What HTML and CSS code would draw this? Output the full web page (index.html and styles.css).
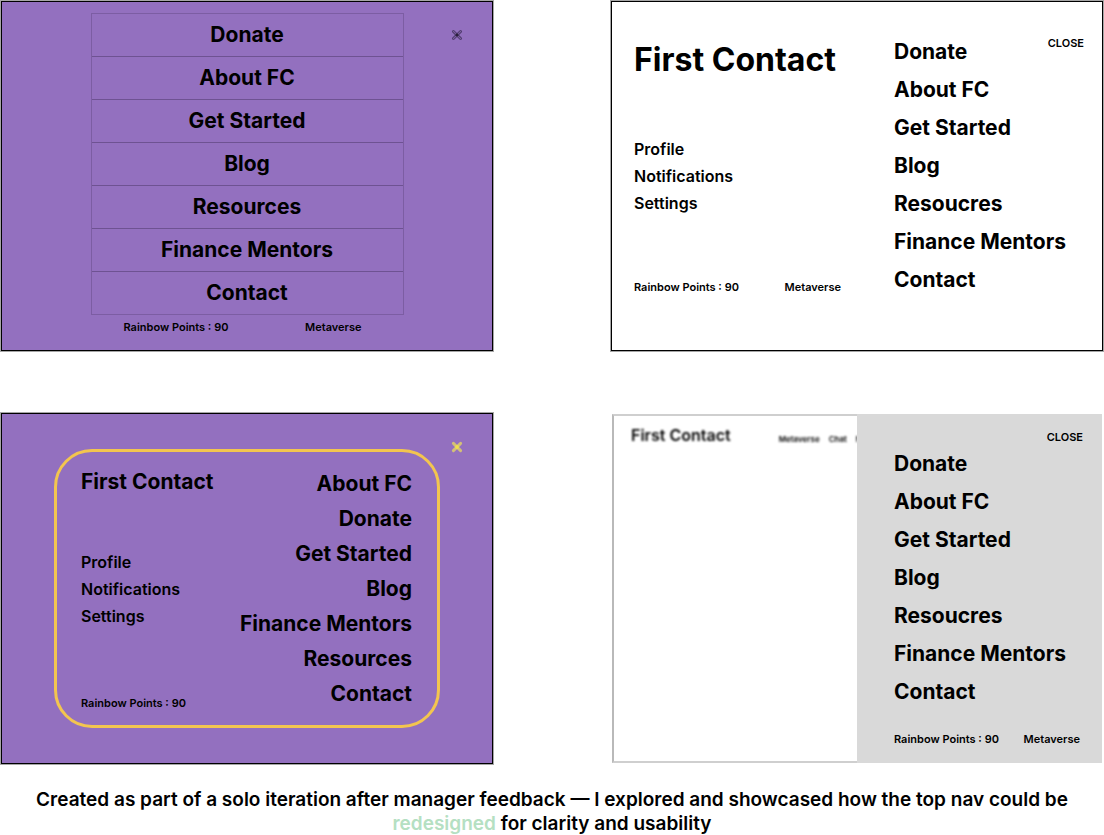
FILE: index.html
```
<!DOCTYPE html>
<html lang="en">
<head>
<meta charset="utf-8">
<meta name="viewport" content="width=device-width, initial-scale=1">
<title>Top nav iterations</title>
<link rel="stylesheet" href="styles.css">
</head>
<body>
<main class="page">
  <div class="boards">
    <section class="board board-purple stacked">
      <div class="stacked-main">
        <nav class="menu menu-boxed">
          <a href="#">Donate</a><a href="#">About FC</a><a href="#">Get Started</a><a href="#">Blog</a><a href="#">Resources</a><a href="#">Finance Mentors</a><a href="#">Contact</a>
        </nav>
        <div class="meta"><span>Rainbow Points : 90</span><a href="#">Metaverse</a></div>
      </div>
      <button class="close-icon" aria-label="Close">
        <svg width="12" height="12" viewBox="0 0 12 12" fill="none" stroke-linecap="round"><path d="M2.4 2.4 9.6 9.6M9.6 2.4 2.4 9.6" stroke="#4a3768" stroke-width="2.8"/><path d="M2.4 2.4 9.6 9.6M9.6 2.4 2.4 9.6" stroke="#7d60a2" stroke-width="1.2"/><circle cx="6" cy="6" r="1.4" fill="#2b203c"/></svg>
      </button>
    </section>

    <section class="board board-white split">
      <div class="split-side">
        <h1 class="title title-large">First Contact</h1>
        <nav class="submenu">
          <a href="#">Profile</a><a href="#">Notifications</a><a href="#">Settings</a>
        </nav>
        <div class="meta"><span>Rainbow Points : 90</span><a href="#">Metaverse</a></div>
      </div>
      <nav class="menu menu-loose">
        <a href="#">Donate</a><a href="#">About FC</a><a href="#">Get Started</a><a href="#">Blog</a><a href="#">Resoucres</a><a href="#">Finance Mentors</a><a href="#">Contact</a>
      </nav>
      <button class="close-text">CLOSE</button>
    </section>

    <section class="board board-purple framed">
      <div class="frame">
        <div class="frame-side">
          <h2 class="title">First Contact</h2>
          <nav class="submenu">
            <a href="#">Profile</a><a href="#">Notifications</a><a href="#">Settings</a>
          </nav>
          <div class="meta"><span>Rainbow Points : 90</span></div>
        </div>
        <nav class="menu menu-right">
          <a href="#">About FC</a><a href="#">Donate</a><a href="#">Get Started</a><a href="#">Blog</a><a href="#">Finance Mentors</a><a href="#">Resources</a><a href="#">Contact</a>
        </nav>
      </div>
      <button class="close-icon" aria-label="Close">
        <svg width="12" height="12" viewBox="0 0 12 12" fill="none" stroke-linecap="round"><path d="M2.4 2.4 9.6 9.6M9.6 2.4 2.4 9.6" stroke="#d3c077" stroke-width="3"/><circle cx="6" cy="6" r="1.9" fill="#f0e04c"/></svg>
      </button>
    </section>

    <section class="board-drawer">
      <div class="backdrop">
        <div class="backdrop-bar">
          <span class="backdrop-logo">First Contact</span>
          <span class="backdrop-links"><span>Metaverse</span><span>Chat</span><span>N</span></span>
        </div>
      </div>
      <div class="drawer">
        <button class="close-text">CLOSE</button>
        <nav class="menu menu-loose">
          <a href="#">Donate</a><a href="#">About FC</a><a href="#">Get Started</a><a href="#">Blog</a><a href="#">Resoucres</a><a href="#">Finance Mentors</a><a href="#">Contact</a>
        </nav>
        <div class="meta"><span>Rainbow Points : 90</span><a href="#">Metaverse</a></div>
      </div>
    </section>
  </div>
  <p class="caption">Created as part of a solo iteration after manager feedback — I explored and showcased how the top nav could be <em>redesigned</em> for clarity and usability</p>
</main>
</body>
</html>
```
FILE: styles.css
```
* { box-sizing: border-box; }

body {
  margin: 0;
  background: #fff;
  color: #000;
  font-family: Inter, "Liberation Sans", sans-serif;
  font-weight: 600;
}

a { color: inherit; text-decoration: none; }
h1, h2, p { margin: 0; }

button {
  padding: 0;
  border: 0;
  background: none;
  color: inherit;
  font: inherit;
  cursor: pointer;
}

.page { padding: 1px 1px 0; }

.boards {
  display: grid;
  grid-template-columns: minmax(0, 1fr) minmax(0, 1fr);
  gap: 62px 118px;
}

.board {
  border: 1px solid #000;
  box-shadow: 0 0 0 1px rgba(0, 0, 0, 0.35);
}
.board-purple { background: #9370bf; }
.board-white { background: #fff; }

.title { font-size: 21px; line-height: 28px; font-weight: 700; }
.title-large { font-size: 32px; line-height: 40px; }

.menu { display: flex; flex-direction: column; font-size: 21px; font-weight: 700; white-space: nowrap; }
.submenu { display: flex; flex-direction: column; font-size: 16px; line-height: 27px; }

.meta {
  display: flex;
  justify-content: space-between;
  font-size: 11px;
  line-height: 16px;
  white-space: nowrap;
}

.close-text { font-size: 11px; line-height: 16px; }
.close-icon { display: flex; }

/* Boxed list */
.stacked {
  display: grid;
  grid-template-columns: minmax(0, 1fr) minmax(0, 313px) minmax(0, 1fr);
  padding: 11px 0 15px;
}
.stacked-main { grid-column: 2; }
.menu-boxed { border: 1px solid #7c5da3; }
.menu-boxed a { line-height: 42px; text-align: center; }
.menu-boxed a + a { border-top: 1px solid #6e5292; }
.stacked .meta { padding: 4px 42px 0 33px; }
.stacked .close-icon { justify-self: end; align-self: start; margin: 16px 29px 0 0; }

/* Two columns */
.split {
  display: grid;
  grid-template-columns: 260px minmax(0, 1fr) auto;
  padding: 31px 18px 50px 22px;
}
.split-side { display: flex; flex-direction: column; padding: 7px 53px 5px 0; }
.title-large { white-space: nowrap; }
.split .submenu { padding-top: 56px; }
.split .meta { margin-top: auto; }
.menu-loose a { line-height: 38px; }
.split .close-text { align-self: start; margin-top: 2px; }

/* Rounded frame */
.framed {
  display: grid;
  grid-template-columns: minmax(0, 1fr) 52px;
  padding: 35px 0 35px 52px;
}
.frame {
  display: flex;
  justify-content: space-between;
  padding: 14px 25px 14px 24px;
  border: 3px solid #f3c54f;
  border-radius: 38px;
}
.frame-side { display: flex; flex-direction: column; padding-top: 2px; }
.framed .submenu { padding-top: 53px; }
.framed .meta { margin-top: auto; }
.menu-right a { line-height: 35px; text-align: right; }
.framed .close-icon { justify-self: start; align-self: start; margin: -8px 0 0 11px; }

/* Drawer over a blurred page */
.board-drawer {
  display: grid;
  grid-template-columns: minmax(0, 1fr) minmax(0, 1fr);
  margin: 1px;
}
.backdrop {
  overflow: hidden;
  border: 2px solid #cfcfcf;
  border-left-color: #b9b9b9;
  border-right: 0;
}
.backdrop-bar {
  display: flex;
  gap: 48px;
  align-items: center;
  padding: 8px 0 0 17px;
  white-space: nowrap;
  filter: blur(1px);
}
.backdrop-logo { font-size: 16px; line-height: 20px; }
.backdrop-links { display: flex; gap: 9px; padding-top: 9px; font-size: 8px; line-height: 12px; }
.drawer {
  display: flex;
  flex-direction: column;
  padding: 15px 19px 16px 37px;
  background: #d9d9d9;
}
.drawer .close-text { align-self: flex-end; }
.drawer .meta { margin-top: auto; padding-right: 3px; }

.caption {
  padding-top: 24px;
  font-size: 19px;
  line-height: 24px;
  text-align: center;
}
.caption em { color: #b5e0c2; font-style: normal; }
```
